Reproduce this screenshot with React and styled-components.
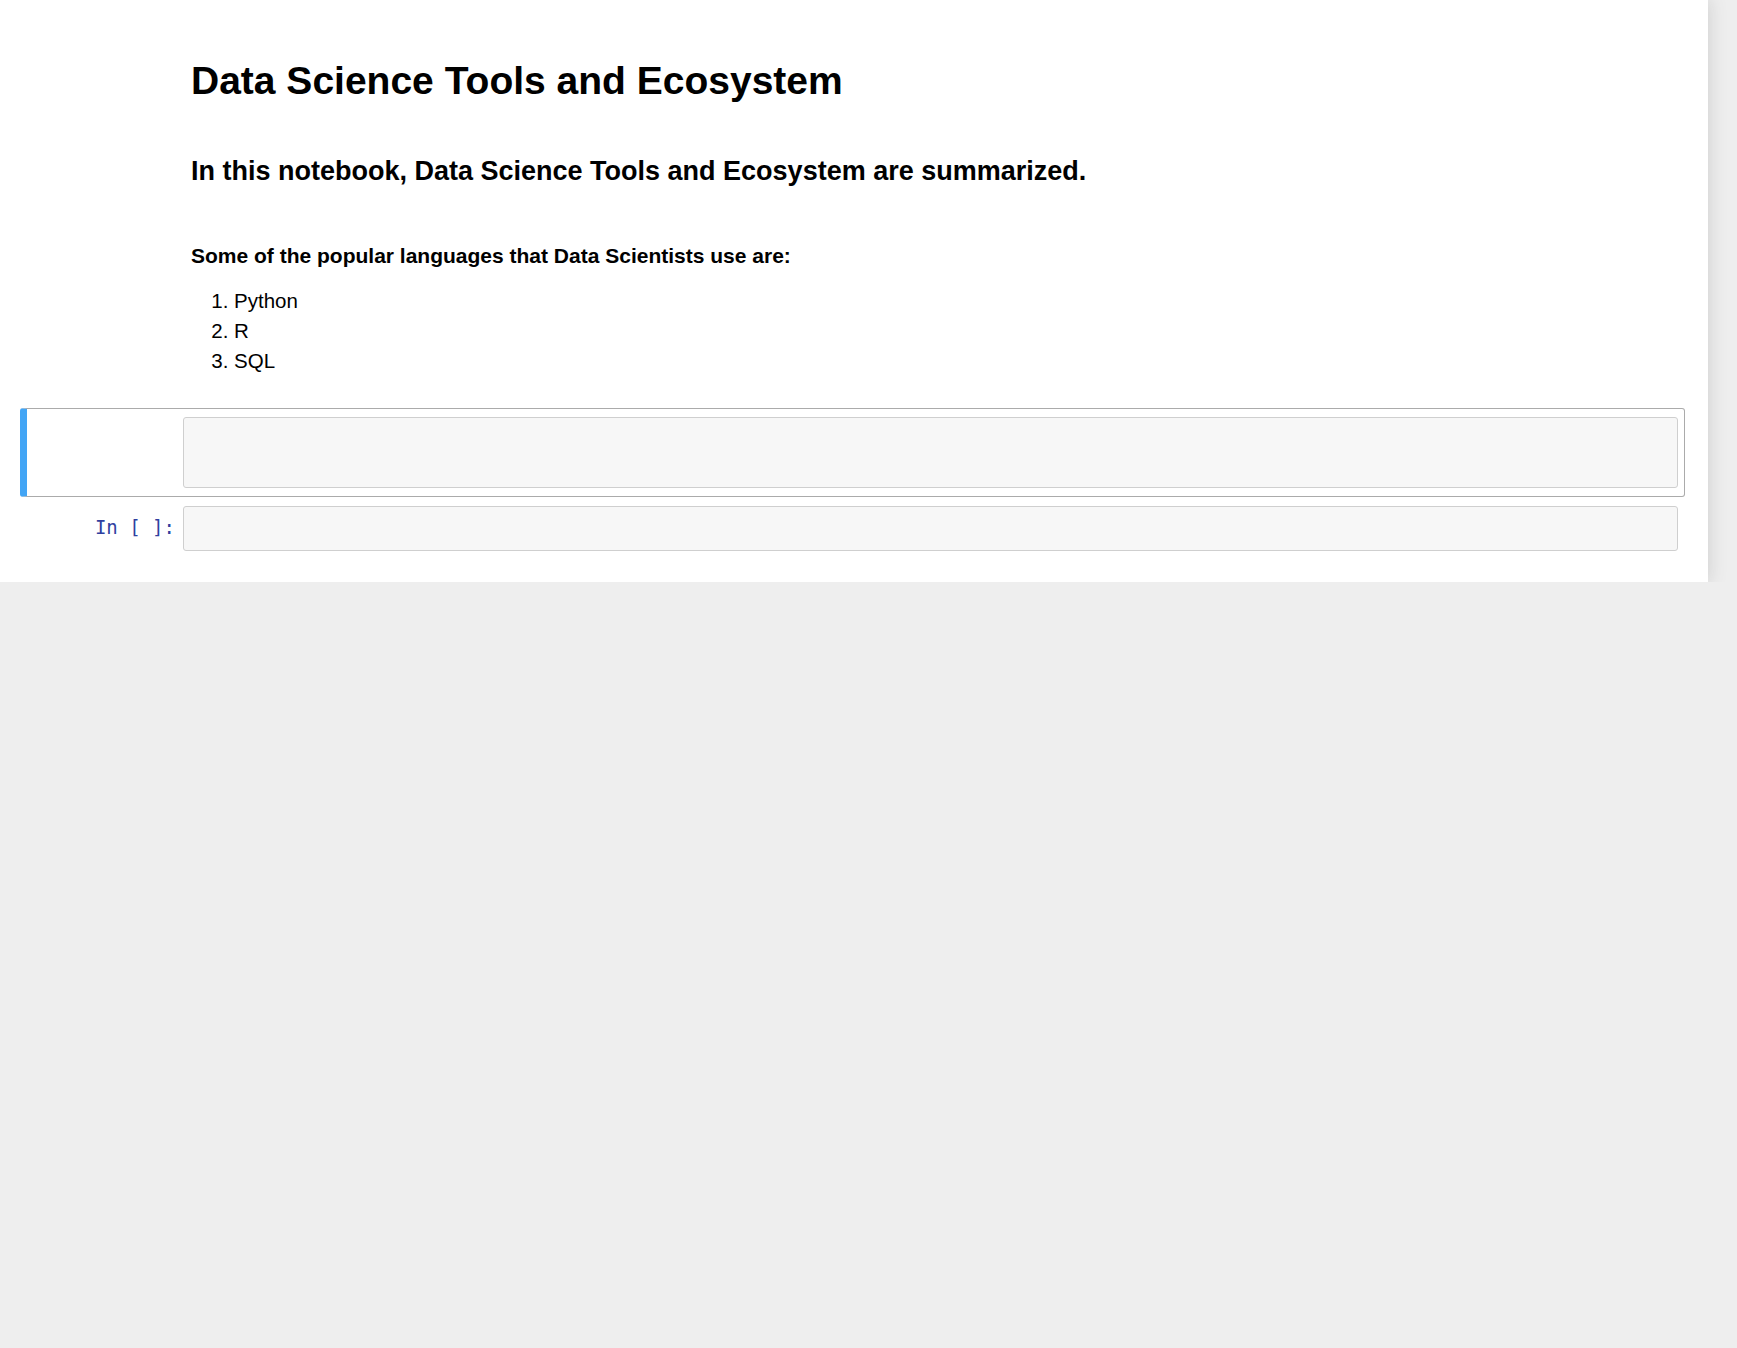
import React from "react";
import styled, { createGlobalStyle } from "styled-components";

const GlobalStyle = createGlobalStyle`
  html, body {
    margin: 0;
    padding: 0;
    background: #eeeeee;
  }
  body {
    font-family: "Liberation Sans", Arial, sans-serif;
    color: #000;
  }
  * {
    box-sizing: border-box;
  }
`

const NotebookPage = styled.div`
  width: 1708px;
  background: #fff;
  box-shadow: 0px 0px 17px 1px rgba(87, 87, 87, 0.2);
  padding: 0 23px 22px 20px;
`

const Cell = styled.div`
  display: flex;
  align-items: flex-start;
  border: 1px solid ${(p) => (p.selected ? "#ababab" : "transparent")};
  border-left: 7px solid ${(p) => (p.selected ? "#42A5F5" : "transparent")};
  border-radius: 3px;
  padding: 8px 6px 8px 0;
`

const Prompt = styled.div`
  flex: 0 0 156px;
  padding: 10px 8px 0 0;
  text-align: right;
  font-family: "DejaVu Sans Mono", "Liberation Mono", monospace;
  font-size: 19px;
  line-height: 23px;
  color: #303f9f;
  white-space: pre;
`

const InputArea = styled.div`
  flex: 1;
  height: ${(p) => p.h}px;
  background: #f7f7f7;
  border: 1px solid #cfcfcf;
  border-radius: 3px;
`

const Rendered = styled.div`
  flex: 1;
  padding: 0 8px;
`

const Title = styled.h1`
  margin: 50px 0 0;
  font-size: 39px;
  line-height: 44px;
  font-weight: bold;
`

const Subtitle = styled.h3`
  margin: 52px 0 0;
  font-size: 27px;
  line-height: 32px;
  font-weight: bold;
`

const Lead = styled.h4`
  margin: 56px 0 0;
  font-size: 21px;
  line-height: 25px;
  font-weight: bold;
`

const LangList = styled.ol`
  margin: 18px 0 23px;
  padding-left: 2.1em;
  font-size: 20.5px;
  line-height: 30px;
`

const languages = ["Python", "R", "SQL"];

const App = () => {
  return (
    <>
      <GlobalStyle />
      <NotebookPage>
        <Cell>
          <Prompt />
          <Rendered>
            <Title>Data Science Tools and Ecosystem</Title>
            <Subtitle>In this notebook, Data Science Tools and Ecosystem are summarized.</Subtitle>
            <Lead>Some of the popular languages that Data Scientists use are:</Lead>
            <LangList>
              {languages.map((l) => (
                <li key={l}>{l}</li>
              ))}
            </LangList>
          </Rendered>
        </Cell>
        <Cell selected>
          <Prompt />
          <InputArea h={71} />
        </Cell>
        <Cell>
          <Prompt>In [ ]:</Prompt>
          <InputArea h={45} />
        </Cell>
      </NotebookPage>
    </>
  );
};

export default App;
